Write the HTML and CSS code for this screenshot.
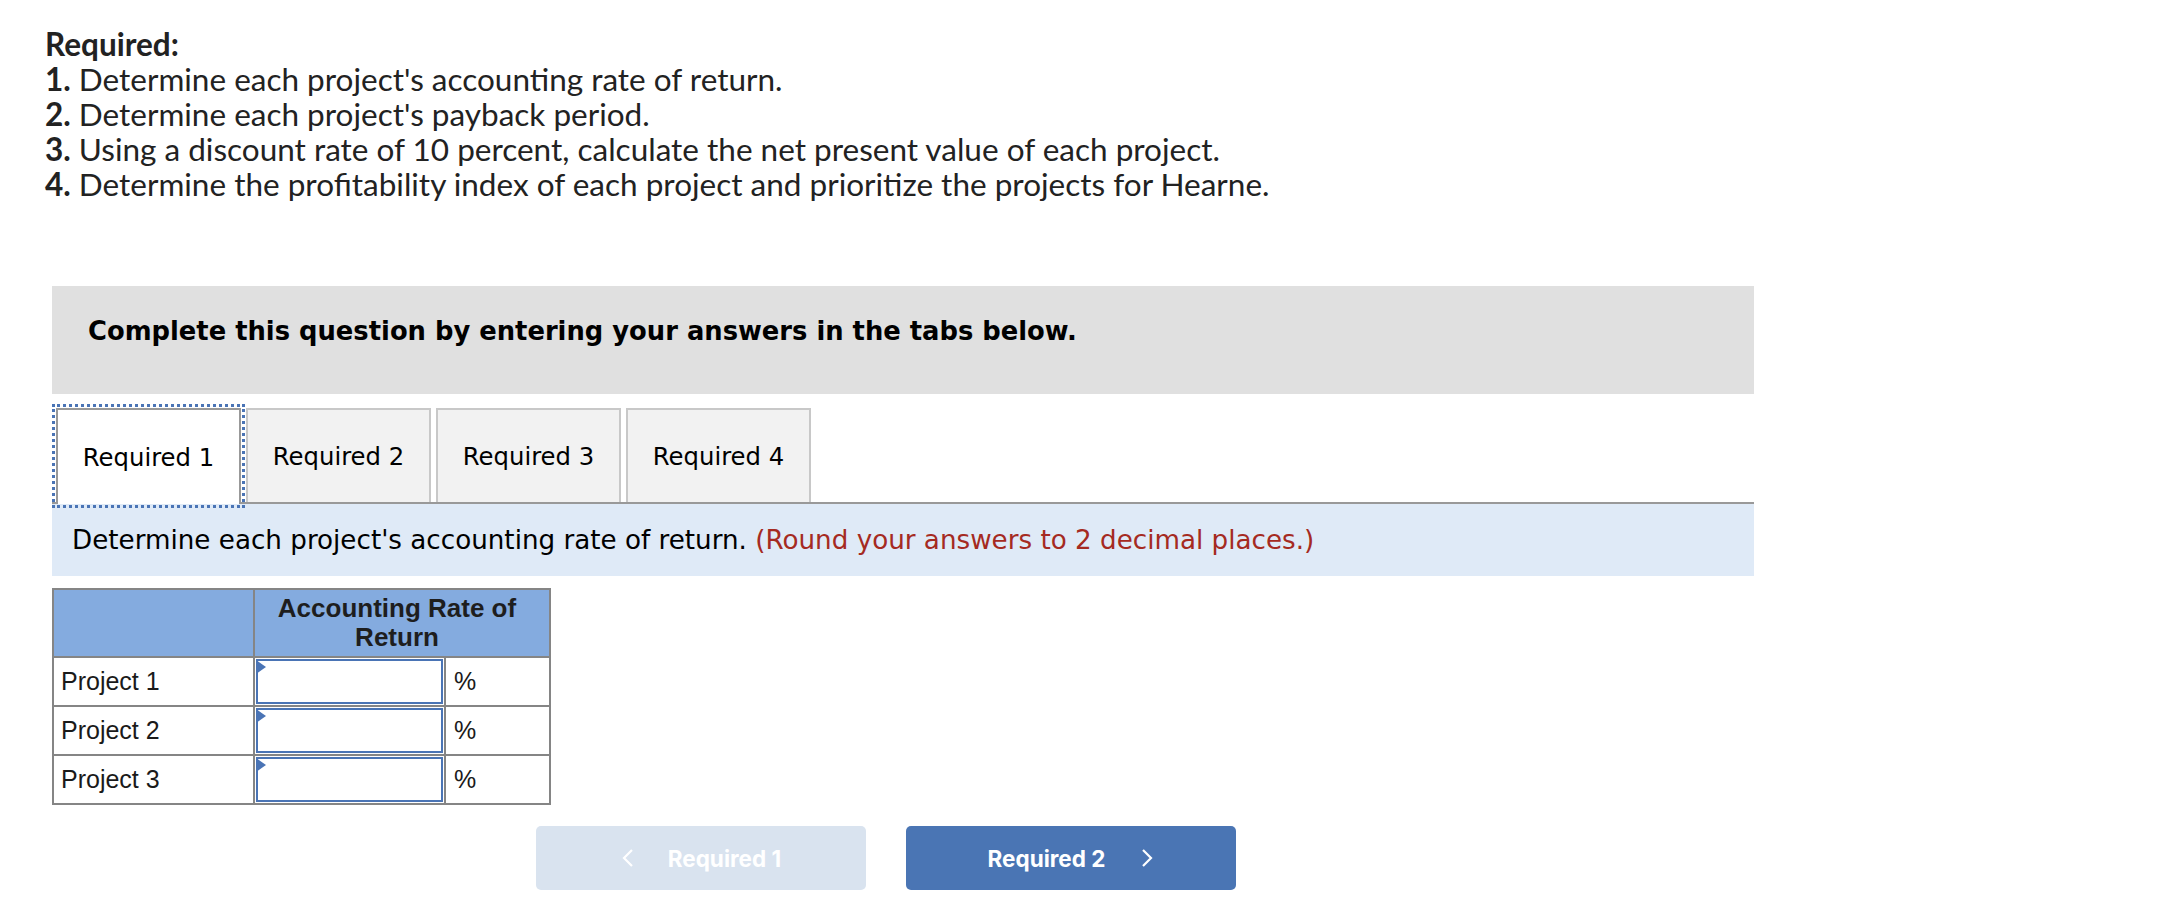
FILE: index.html
```html
<!DOCTYPE html>
<html lang="en">
<head>
<meta charset="utf-8">
<title>Required</title>
<link rel="stylesheet" href="styles.css">
</head>
<body>
<div class="page">
  <div class="required">
    <p class="req-title">Required:</p>
    <p><b>1.</b> Determine each project's accounting rate of return.</p>
    <p><b>2.</b> Determine each project's payback period.</p>
    <p><b>3.</b> Using a discount rate of 10 percent, calculate the net present value of each project.</p>
    <p><b>4.</b> Determine the profitability index of each project and prioritize the projects for Hearne.</p>
  </div>

  <div class="question">
    <div class="notice">Complete this question by entering your answers in the tabs below.</div>

    <div class="tabs">
      <button class="tab active">Required 1</button>
      <button class="tab">Required 2</button>
      <button class="tab">Required 3</button>
      <button class="tab">Required 4</button>
    </div>

    <div class="instruction">Determine each project's accounting rate of return. <span class="hint">(Round your answers to 2 decimal places.)</span></div>

    <table class="grid">
      <colgroup>
        <col class="c1"><col class="c2"><col class="c3">
      </colgroup>
      <thead>
        <tr>
          <th></th>
          <th colspan="2">Accounting Rate of<br>Return</th>
        </tr>
      </thead>
      <tbody>
        <tr>
          <td class="label">Project 1</td>
          <td class="inp"><div class="field"><span class="flag"></span></div></td>
          <td class="unit">%</td>
        </tr>
        <tr>
          <td class="label">Project 2</td>
          <td class="inp"><div class="field"><span class="flag"></span></div></td>
          <td class="unit">%</td>
        </tr>
        <tr>
          <td class="label">Project 3</td>
          <td class="inp"><div class="field"><span class="flag"></span></div></td>
          <td class="unit">%</td>
        </tr>
      </tbody>
    </table>

    <div class="nav">
      <button class="nav-btn prev">
        <svg class="chev" width="13" height="18" viewBox="0 0 13 18"><polyline points="11,1 3,9 11,17" fill="none" stroke="#ffffff" stroke-width="2.2"/></svg>
        <span>Required 1</span>
      </button>
      <button class="nav-btn next">
        <span>Required 2</span>
        <svg class="chev" width="13" height="18" viewBox="0 0 13 18"><polyline points="2,1 10,9 2,17" fill="none" stroke="#ffffff" stroke-width="2.2"/></svg>
      </button>
    </div>
  </div>
</div>
</body>
</html>
```

FILE: styles.css
```css
html, body {
  margin: 0;
  padding: 0;
  background: #ffffff;
}

.page {
  padding: 27px 0 0 0;
}

.required {
  padding-left: 45px;
  font-family: "Lato", "Open Sans", sans-serif;
  font-size: 31.5px;
  line-height: 35px;
  color: #222222;
}

.required p {
  margin: 0;
}

.req-title {
  font-weight: 700;
}

.required b {
  font-weight: 700;
}

.question {
  margin: 84px 0 0 52px;
  width: 1702px;
}

.notice {
  background: #e0e0e0;
  height: 108px;
  box-sizing: border-box;
  padding: 30px 0 0 36px;
  font-family: "DejaVu Sans", Verdana, sans-serif;
  font-weight: 700;
  font-size: 25.8px;
  line-height: 30px;
  color: #000000;
}

.tabs {
  display: flex;
  gap: 5px;
  margin-top: 14px;
  padding-left: 4px;
  border-bottom: 2px solid #999999;
  height: 94px;
}

.tab {
  width: 185px;
  height: 94px;
  box-sizing: border-box;
  border: 2px solid #c8c8c8;
  border-bottom: none;
  background: #f2f2f2;
  font-family: "DejaVu Sans", Verdana, sans-serif;
  font-size: 24.3px;
  color: #000000;
  padding: 0;
  margin: 0;
}

.tab.active {
  background: #ffffff;
  border-color: #999999;
  height: 96px;
  outline: 3px dotted #4a74b5;
  outline-offset: 1px;
  position: relative;
  z-index: 1;
}

.instruction {
  background: #dfeaf7;
  height: 72px;
  box-sizing: border-box;
  padding: 21px 0 0 20px;
  font-family: "DejaVu Sans", Verdana, sans-serif;
  font-size: 26.2px;
  line-height: 30px;
  color: #000000;
}

.hint {
  color: #a52a22;
}

.grid {
  margin-top: 12px;
  border-collapse: collapse;
  width: 497px;
  table-layout: fixed;
  font-family: "Liberation Sans", Arial, sans-serif;
  color: #1a1a1a;
}

.c1 { width: 201px; }
.c2 { width: 191px; }
.c3 { width: 105px; }

.grid th,
.grid td {
  border: 2px solid #858585;
  padding: 0;
}

.grid th {
  background: #84abdf;
  height: 66px;
  font-size: 26px;
  font-weight: 700;
  line-height: 29px;
  color: #1e1e1e;
  text-align: center;
  vertical-align: middle;
  padding-right: 10px;
}

.grid td {
  height: 45px;
  font-size: 25px;
  vertical-align: middle;
}

.grid td.label {
  padding-left: 7px;
}

.grid td.unit {
  padding-left: 8px;
}

.grid td.inp {
  padding: 1px;
}

.field {
  position: relative;
  height: 45px;
  box-sizing: border-box;
  border: 2px solid #4a74b5;
  background: #ffffff;
}

.flag {
  position: absolute;
  left: -2px;
  top: -1px;
  width: 0;
  height: 0;
  border-top: 7px solid transparent;
  border-bottom: 7px solid transparent;
  border-left: 10px solid #4a74b5;
}

.nav {
  display: flex;
  gap: 40px;
  margin-top: 21px;
  padding-left: 484px;
}

.nav-btn {
  width: 330px;
  height: 64px;
  border: none;
  border-radius: 5px;
  display: flex;
  align-items: center;
  justify-content: center;
  gap: 34px;
  font-family: "Inter", "Roboto", sans-serif;
  font-weight: 700;
  font-size: 22.5px;
  color: #ffffff;
  padding: 0;
}

.nav-btn.prev {
  background: #d9e3ef;
}

.nav-btn.next {
  background: #4a75b4;
  gap: 36px;
}

.chev {
  display: block;
}
```
